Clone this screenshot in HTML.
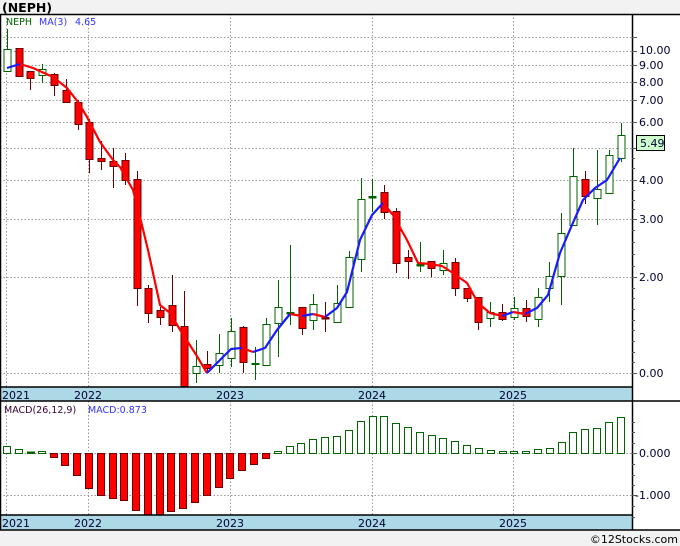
<!DOCTYPE html>
<html><head><meta charset="utf-8"><style>
html,body{margin:0;padding:0;background:#f2f2f2;}
svg{display:block;font-family:"DejaVu Sans","Liberation Sans",sans-serif;}
</style></head><body>
<svg width="680" height="546" viewBox="0 0 680 546" xmlns="http://www.w3.org/2000/svg">
<rect x="0" y="0" width="680" height="546" fill="#f2f2f2"/>
<rect x="0" y="14" width="680" height="516" fill="#fff"/>
<text x="2" y="12" font-size="12.5" font-weight="bold" fill="#000">(NEPH)</text>

<!-- grid main -->
<g stroke="#999" stroke-dasharray="1.5,2" stroke-width="1">
<line x1="0" y1="37.5" x2="632" y2="37.5"/>
<line x1="0" y1="51.5" x2="632" y2="51.5"/>
<line x1="0" y1="65.5" x2="632" y2="65.5"/>
<line x1="0" y1="82.5" x2="632" y2="82.5"/>
<line x1="0" y1="100.5" x2="632" y2="100.5"/>
<line x1="0" y1="122.5" x2="632" y2="122.5"/>
<line x1="0" y1="148.5" x2="632" y2="148.5"/>
<line x1="0" y1="180.5" x2="632" y2="180.5"/>
<line x1="0" y1="219.5" x2="632" y2="219.5"/>
<line x1="0" y1="277.5" x2="632" y2="277.5"/>
<line x1="0" y1="373.5" x2="632" y2="373.5"/>
<line x1="6.5" y1="14" x2="6.5" y2="387"/>
<line x1="88.5" y1="14" x2="88.5" y2="387"/>
<line x1="230.5" y1="14" x2="230.5" y2="387"/>
<line x1="372.5" y1="14" x2="372.5" y2="387"/>
<line x1="513.5" y1="14" x2="513.5" y2="387"/>
<line x1="0" y1="453.5" x2="632" y2="453.5"/>
<line x1="0" y1="495.5" x2="632" y2="495.5"/>
<line x1="6.5" y1="401" x2="6.5" y2="515"/>
<line x1="88.5" y1="401" x2="88.5" y2="515"/>
<line x1="230.5" y1="401" x2="230.5" y2="515"/>
<line x1="372.5" y1="401" x2="372.5" y2="515"/>
<line x1="513.5" y1="401" x2="513.5" y2="515"/>
</g>

<text x="6" y="25" font-size="9.5" fill="#006400">NEPH</text>
<text x="39" y="25" font-size="9.5" fill="#3333ff">MA(3)</text>
<text x="75" y="25" font-size="9.5" fill="#3333ff">4.65</text>

<!-- candles -->
<g stroke-width="1">
<g stroke="#006400" fill="#fff">
<line x1="7.5" y1="29" x2="7.5" y2="72"/><rect x="4" y="49.5" width="7" height="22"/>
<line x1="42.5" y1="64" x2="42.5" y2="83"/><rect x="39" y="69.5" width="7" height="6"/>
<line x1="196.5" y1="340" x2="196.5" y2="383"/><rect x="193" y="366.5" width="7" height="7"/>
<line x1="219.5" y1="334" x2="219.5" y2="373"/><rect x="216" y="353.5" width="7" height="12"/>
<line x1="231.5" y1="318" x2="231.5" y2="367"/><rect x="228" y="331.5" width="7" height="27"/>
<line x1="255.5" y1="347" x2="255.5" y2="380"/><rect x="252" y="363.5" width="7" height="1"/>
<line x1="266.5" y1="318" x2="266.5" y2="365"/><rect x="263" y="324.5" width="7" height="41"/>
<line x1="278.5" y1="280" x2="278.5" y2="357"/><rect x="275" y="307.5" width="7" height="16"/>
<line x1="290.5" y1="245" x2="290.5" y2="325"/><rect x="287" y="312.5" width="7" height="1.5" fill="#006400"/>
<line x1="313.5" y1="294" x2="313.5" y2="330"/><rect x="310" y="304.5" width="7" height="16"/>
<line x1="337.5" y1="285" x2="337.5" y2="323"/><rect x="334" y="303.5" width="7" height="19"/>
<line x1="349.5" y1="251" x2="349.5" y2="307"/><rect x="346" y="257.5" width="7" height="50"/>
<line x1="361.5" y1="178" x2="361.5" y2="272"/><rect x="358" y="199.5" width="7" height="60"/>
<line x1="372.5" y1="179" x2="372.5" y2="212"/><rect x="369" y="196.5" width="7" height="1.5" fill="#006400"/>
<line x1="420.5" y1="242" x2="420.5" y2="272"/><rect x="417" y="264.5" width="7" height="1.5" fill="#006400"/>
<line x1="443.5" y1="250" x2="443.5" y2="275"/><rect x="440" y="263.5" width="7" height="7"/>
<line x1="490.5" y1="302" x2="490.5" y2="327"/><rect x="487" y="312.5" width="7" height="6"/>
<line x1="514.5" y1="297" x2="514.5" y2="320"/><rect x="511" y="308.5" width="7" height="9"/>
<line x1="538.5" y1="288" x2="538.5" y2="327"/><rect x="535" y="297.5" width="7" height="22"/>
<line x1="549.5" y1="262" x2="549.5" y2="302"/><rect x="546" y="276.5" width="7" height="12"/>
<line x1="561.5" y1="213" x2="561.5" y2="305"/><rect x="558" y="233.5" width="7" height="43"/>
<line x1="573.5" y1="148" x2="573.5" y2="226"/><rect x="570" y="176.5" width="7" height="49"/>
<line x1="597.5" y1="150" x2="597.5" y2="225"/><rect x="594" y="189.5" width="7" height="9"/>
<line x1="609.5" y1="150" x2="609.5" y2="193"/><rect x="606" y="155.5" width="7" height="38"/>
<line x1="621.5" y1="123" x2="621.5" y2="162"/><rect x="618" y="135.5" width="7" height="23"/>
</g>
<g stroke="#6b0000" fill="#ff0000">
<line x1="19.5" y1="48" x2="19.5" y2="76"/><rect x="16" y="48.5" width="7" height="28"/>
<line x1="30.5" y1="71" x2="30.5" y2="90"/><rect x="27" y="71.5" width="7" height="7"/>
<line x1="54.5" y1="73" x2="54.5" y2="96"/><rect x="51" y="74.5" width="7" height="11"/>
<line x1="66.5" y1="79" x2="66.5" y2="102"/><rect x="63" y="90.5" width="7" height="12"/>
<line x1="78.5" y1="100" x2="78.5" y2="130"/><rect x="75" y="102.5" width="7" height="22"/>
<line x1="89.5" y1="119" x2="89.5" y2="173"/><rect x="86" y="122.5" width="7" height="37"/>
<line x1="101.5" y1="141" x2="101.5" y2="170"/><rect x="98" y="158.5" width="7" height="3"/>
<line x1="113.5" y1="148" x2="113.5" y2="188"/><rect x="110" y="161.5" width="7" height="5"/>
<line x1="125.5" y1="153" x2="125.5" y2="185"/><rect x="122" y="160.5" width="7" height="20"/>
<line x1="137.5" y1="171" x2="137.5" y2="306"/><rect x="134" y="179.5" width="7" height="109"/>
<line x1="148.5" y1="285" x2="148.5" y2="323"/><rect x="145" y="288.5" width="7" height="25"/>
<line x1="160.5" y1="307" x2="160.5" y2="325"/><rect x="157" y="310.5" width="7" height="7"/>
<line x1="172.5" y1="275" x2="172.5" y2="332"/><rect x="169" y="305.5" width="7" height="20"/>
<line x1="184.5" y1="291" x2="184.5" y2="387"/><rect x="181" y="326.5" width="7" height="60"/>
<line x1="207.5" y1="351" x2="207.5" y2="373"/><rect x="204" y="364.5" width="7" height="4"/>
<line x1="243.5" y1="326" x2="243.5" y2="373"/><rect x="240" y="327.5" width="7" height="35"/>
<line x1="302.5" y1="307" x2="302.5" y2="335"/><rect x="299" y="307.5" width="7" height="21"/>
<line x1="325.5" y1="302" x2="325.5" y2="332"/><rect x="322" y="317.5" width="7" height="1.5" fill="#6b0000"/>
<line x1="384.5" y1="185" x2="384.5" y2="219"/><rect x="381" y="192.5" width="7" height="20"/>
<line x1="396.5" y1="208" x2="396.5" y2="273"/><rect x="393" y="211.5" width="7" height="52"/>
<line x1="408.5" y1="250" x2="408.5" y2="279"/><rect x="405" y="257.5" width="7" height="4"/>
<line x1="431.5" y1="261" x2="431.5" y2="277"/><rect x="428" y="261.5" width="7" height="7"/>
<line x1="455.5" y1="258" x2="455.5" y2="296"/><rect x="452" y="262.5" width="7" height="26"/>
<line x1="467.5" y1="288" x2="467.5" y2="302"/><rect x="464" y="288.5" width="7" height="10"/>
<line x1="478.5" y1="297" x2="478.5" y2="330"/><rect x="475" y="297.5" width="7" height="25"/>
<line x1="502.5" y1="304" x2="502.5" y2="321"/><rect x="499" y="312.5" width="7" height="7"/>
<line x1="526.5" y1="300" x2="526.5" y2="322"/><rect x="523" y="308.5" width="7" height="8"/>
<line x1="585.5" y1="171" x2="585.5" y2="204"/><rect x="582" y="179.5" width="7" height="17"/>
</g>
</g>

<!-- MA -->
<g fill="none" stroke-width="2.2" stroke-linejoin="round">
<polyline stroke="#ff0000" points="20,64 33,68 53,77 67,88 78,102 87,117 100,142 113,160 120,167 133,190 140,217 148,250 160,305 170,313 182,333 195,353 207,373"/>
<polyline stroke="#ff0000" points="242,348 253,352"/>
<polyline stroke="#ff0000" points="290,314 302,316"/>
<polyline stroke="#ff0000" points="313,314 325,317"/>
<polyline stroke="#ff0000" points="383,203 393,215 407,240 418,263 430,264 442,266 453,273 467,283 478,303 490,313 502,316"/>
<polyline stroke="#ff0000" points="513,312 525,314"/>
<polyline stroke="#1a1aff" points="7,68 20,64"/>
<polyline stroke="#1a1aff" points="207,373 220,360 231,349 242,348"/>
<polyline stroke="#1a1aff" points="253,352 265,348 277,330 290,314"/>
<polyline stroke="#1a1aff" points="302,316 313,314"/>
<polyline stroke="#1a1aff" points="325,317 337,308 347,292 360,240 372,215 383,203"/>
<polyline stroke="#1a1aff" points="502,316 513,312"/>
<polyline stroke="#1a1aff" points="525,314 537,308 548,295 560,253 572,225 583,200 595,188 607,180 620,158"/>
</g>

<!-- MACD bars -->
<text x="4" y="413" font-size="9.5" fill="#330033">MACD(26,12,9)</text>
<text x="88" y="413" font-size="9.5" fill="#3333ff">MACD:0.873</text>
<g stroke="#006400" fill="#fff">
<rect x="3.5" y="446.5" width="7" height="7"/>
<rect x="15.5" y="449.5" width="7" height="4"/>
<rect x="27.5" y="452" width="7" height="1.5" fill="#006400"/>
<rect x="38.5" y="451.5" width="7" height="2"/>
<rect x="274.5" y="451.5" width="7" height="2"/>
<rect x="286.5" y="446.5" width="7" height="7"/>
<rect x="297.5" y="443.5" width="7" height="10"/>
<rect x="309.5" y="439.5" width="7" height="14"/>
<rect x="321.5" y="437.5" width="7" height="16"/>
<rect x="333.5" y="436.5" width="7" height="17"/>
<rect x="345.5" y="430.5" width="7" height="23"/>
<rect x="357.5" y="421.5" width="7" height="32"/>
<rect x="369.5" y="416.5" width="7" height="37"/>
<rect x="380.5" y="416.5" width="7" height="37"/>
<rect x="392.5" y="423.5" width="7" height="30"/>
<rect x="404.5" y="427.5" width="7" height="26"/>
<rect x="416.5" y="432.5" width="7" height="21"/>
<rect x="428.5" y="435.5" width="7" height="18"/>
<rect x="439.5" y="438.5" width="7" height="15"/>
<rect x="451.5" y="441.5" width="7" height="12"/>
<rect x="463.5" y="445.5" width="7" height="8"/>
<rect x="475.5" y="448.5" width="7" height="5"/>
<rect x="487.5" y="450.5" width="7" height="3"/>
<rect x="499.5" y="451.5" width="7" height="2"/>
<rect x="510.5" y="451.5" width="7" height="2"/>
<rect x="522.5" y="451.5" width="7" height="2"/>
<rect x="534.5" y="449.5" width="7" height="4"/>
<rect x="546.5" y="448.5" width="7" height="5"/>
<rect x="558.5" y="442.5" width="7" height="11"/>
<rect x="569.5" y="432.5" width="7" height="21"/>
<rect x="581.5" y="429.5" width="7" height="24"/>
<rect x="593.5" y="428.5" width="7" height="25"/>
<rect x="605.5" y="422.5" width="7" height="31"/>
<rect x="617.5" y="417.5" width="7" height="36"/>
</g>
<g stroke="#6b0000" fill="#ff0000">
<rect x="50.5" y="453.5" width="7" height="4"/>
<rect x="61.5" y="453.5" width="7" height="12"/>
<rect x="73.5" y="453.5" width="7" height="22"/>
<rect x="85.5" y="453.5" width="7" height="35"/>
<rect x="97.5" y="453.5" width="7" height="42"/>
<rect x="109.5" y="453.5" width="7" height="45"/>
<rect x="120.5" y="453.5" width="7" height="47"/>
<rect x="132.5" y="453.5" width="7" height="57"/>
<rect x="144.5" y="453.5" width="7" height="62"/>
<rect x="156.5" y="453.5" width="7" height="62"/>
<rect x="167.5" y="453.5" width="7" height="58"/>
<rect x="179.5" y="453.5" width="7" height="55"/>
<rect x="191.5" y="453.5" width="7" height="49"/>
<rect x="203.5" y="453.5" width="7" height="42"/>
<rect x="215.5" y="453.5" width="7" height="34"/>
<rect x="226.5" y="453.5" width="7" height="25"/>
<rect x="238.5" y="453.5" width="7" height="17"/>
<rect x="250.5" y="453.5" width="7" height="11"/>
<rect x="262.5" y="453.5" width="7" height="5"/>
</g>

<!-- x-axis bands -->
<rect x="0" y="387" width="632" height="14" fill="#add8e6"/>
<rect x="0" y="515" width="632" height="15" fill="#add8e6"/>
<g font-size="11" fill="#000033">
<text x="2" y="399">2021</text><text x="74" y="399">2022</text><text x="216" y="399">2023</text><text x="358" y="399">2024</text><text x="499" y="399">2025</text>
<text x="2" y="527">2021</text><text x="74" y="527">2022</text><text x="216" y="527">2023</text><text x="358" y="527">2024</text><text x="499" y="527">2025</text>
</g>

<!-- frame -->
<g stroke="#000" stroke-width="1.5" fill="none">
<line x1="0" y1="14.5" x2="680" y2="14.5"/>
<line x1="0" y1="387" x2="632" y2="387"/>
<line x1="0" y1="401" x2="680" y2="401"/>
<line x1="0" y1="515" x2="632" y2="515"/>
<line x1="0" y1="530" x2="680" y2="530"/>
<line x1="0.5" y1="14" x2="0.5" y2="530"/>
<line x1="632.5" y1="14" x2="632.5" y2="530"/>
</g>

<!-- right axis ticks -->
<g stroke="#555" stroke-width="1">
<line x1="632" y1="37.5" x2="637" y2="37.5"/>
<line x1="632" y1="51.5" x2="637" y2="51.5"/>
<line x1="632" y1="65.5" x2="637" y2="65.5"/>
<line x1="632" y1="82.5" x2="637" y2="82.5"/>
<line x1="632" y1="100.5" x2="637" y2="100.5"/>
<line x1="632" y1="122.5" x2="637" y2="122.5"/>
<line x1="632" y1="148.5" x2="637" y2="148.5"/>
<line x1="632" y1="158.5" x2="635" y2="158.5"/>
<line x1="632" y1="168.5" x2="635" y2="168.5"/>
<line x1="632" y1="180.5" x2="637" y2="180.5"/>
<line x1="632" y1="190.5" x2="635" y2="190.5"/>
<line x1="632" y1="200.5" x2="635" y2="200.5"/>
<line x1="632" y1="209.5" x2="635" y2="209.5"/>
<line x1="632" y1="219.5" x2="637" y2="219.5"/>
<line x1="632" y1="230.5" x2="635" y2="230.5"/>
<line x1="632" y1="242.5" x2="635" y2="242.5"/>
<line x1="632" y1="254.5" x2="635" y2="254.5"/>
<line x1="632" y1="266.5" x2="635" y2="266.5"/>
<line x1="632" y1="277.5" x2="637" y2="277.5"/>
<line x1="632" y1="288.5" x2="635" y2="288.5"/>
<line x1="632" y1="298.5" x2="635" y2="298.5"/>
<line x1="632" y1="309.5" x2="635" y2="309.5"/>
<line x1="632" y1="320.5" x2="635" y2="320.5"/>
<line x1="632" y1="330.5" x2="635" y2="330.5"/>
<line x1="632" y1="341.5" x2="635" y2="341.5"/>
<line x1="632" y1="352.5" x2="635" y2="352.5"/>
<line x1="632" y1="362.5" x2="635" y2="362.5"/>
<line x1="632" y1="373.5" x2="637" y2="373.5"/>
<line x1="632" y1="422.5" x2="635" y2="422.5"/>
<line x1="632" y1="432.5" x2="635" y2="432.5"/>
<line x1="632" y1="443.5" x2="635" y2="443.5"/>
<line x1="632" y1="453.5" x2="637" y2="453.5"/>
<line x1="632" y1="464.5" x2="635" y2="464.5"/>
<line x1="632" y1="475.5" x2="635" y2="475.5"/>
<line x1="632" y1="485.5" x2="635" y2="485.5"/>
<line x1="632" y1="495.5" x2="637" y2="495.5"/>
<line x1="632" y1="506.5" x2="635" y2="506.5"/>
<line x1="632" y1="517.5" x2="635" y2="517.5"/>
</g>
<g font-size="11" fill="#000033">
<text x="639" y="54">10.00</text>
<text x="639" y="69">9.00</text>
<text x="639" y="86">8.00</text>
<text x="639" y="104">7.00</text>
<text x="639" y="126">6.00</text>
<text x="639" y="184">4.00</text>
<text x="639" y="223">3.00</text>
<text x="639" y="281">2.00</text>
<text x="639" y="377">0.00</text>
<text x="639" y="457">0.000</text>
<text x="635" y="499">-1.000</text>
</g>
<rect x="636.5" y="135.5" width="28" height="15" fill="#ccffcc" stroke="#000" stroke-width="1"/>
<text x="640" y="147" font-size="11" fill="#000033">5.49</text>

<text x="678" y="543" font-size="11" fill="#000" text-anchor="end">©12Stocks.com</text>
</svg>
</body></html>
